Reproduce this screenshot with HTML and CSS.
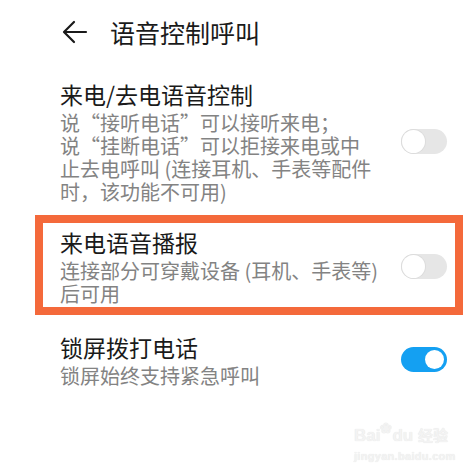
FILE: index.html
```html
<!DOCTYPE html>
<html>
<head>
    <meta charset="utf-8">
    <title>语音控制呼叫</title>
    <link rel="stylesheet" href="styles.css">
</head>
<body>
    <div class="header">
        <svg class="back" width="26" height="24" viewBox="0 0 26 24">
            <path d="M24 12H3M12 2L2 12l10 10" fill="none" stroke="#1a1a1a" stroke-width="2.2" stroke-linecap="round" stroke-linejoin="round"/>
        </svg>
        <h1>语音控制呼叫</h1>
    </div>

    <ul class="settings">
        <li class="item">
            <div class="text">
                <div class="title">来电/去电语音控制</div>
                <div class="desc">
                    <div class="line">说“接听电话”可以接听来电；</div>
                    <div class="line">说“挂断电话”可以拒接来电或中</div>
                    <div class="line">止去电呼叫 (连接耳机、手表等配件</div>
                    <div class="line">时，该功能不可用)</div>
                </div>
            </div>
            <span class="switch"></span>
        </li>
        <li class="item marked">
            <div class="text">
                <div class="title">来电语音播报</div>
                <div class="desc">
                    <div class="line">连接部分可穿戴设备 (耳机、手表等)</div>
                    <div class="line">后可用</div>
                </div>
            </div>
            <span class="switch"></span>
        </li>
        <li class="item last">
            <div class="text">
                <div class="title">锁屏拨打电话</div>
                <div class="desc">
                    <div class="line">锁屏始终支持紧急呼叫</div>
                </div>
            </div>
            <span class="switch on"></span>
        </li>
    </ul>

    <!-- watermark -->
    <div class="watermark">
        <div class="wm-logo">Bai<span class="paw">❀</span>du <span class="wm-cn">经验</span></div>
        <div class="wm-url">jingyan.baidu.com</div>
    </div>
</body>
</html>
```

FILE: styles.css
```css
* {
    box-sizing: border-box;
}

html, body {
    margin: 0;
    padding: 0;
    background: #fff;
    font-family: "Noto Sans CJK SC", "Noto Sans", sans-serif;
}

body {
    position: relative;
    width: 474px;
    height: 471px;
    overflow: hidden;
}

.header {
    display: flex;
    align-items: center;
    height: 62px;
    padding: 1px 0 0 62px;
}

.back {
    display: block;
    margin-right: 22px;
}

.header h1 {
    margin: 0;
    font-size: 25px;
    font-weight: 400;
    line-height: 30px;
    color: #1a1a1a;
}

.settings {
    list-style: none;
    margin: 0;
    padding: 17px 0 0 0;
}

.item {
    display: flex;
    align-items: center;
    justify-content: space-between;
    padding: 0 27px 0 60px;
}

.item.marked {
    margin: 12px 11px 17px 35px;
    padding: 4px 8px 2px 17px;
    border: 8px solid #f4693b;
}

.title {
    font-size: 23px;
    line-height: 30px;
    color: #1a1a1a;
}

.desc {
    margin-top: 2px;
    font-size: 20px;
    color: #838383;
    white-space: nowrap;
}

.desc .line {
    height: 23px;
    line-height: 23px;
}

.switch {
    position: relative;
    flex: none;
    width: 46px;
    height: 25px;
    border-radius: 13px;
    background: #e6e6e6;
}

.switch:after {
    content: "";
    position: absolute;
    top: 1px;
    left: 1px;
    width: 23px;
    height: 23px;
    border-radius: 50%;
    background: #fff;
    box-shadow: 0 0 0 1px #dcdcdc;
}

.switch.on {
    background: #14a0f2;
}

.switch.on:after {
    top: 3px;
    left: auto;
    right: 3px;
    width: 19px;
    height: 19px;
    box-shadow: none;
}

.watermark {
    position: absolute;
    left: 354px;
    top: 414px;
    color: #f3f3f3;
    text-shadow: 0 0 1px #e0e0e0;
    font-family: "Liberation Sans", sans-serif;
}

.wm-logo {
    font-size: 17px;
    font-weight: 700;
    line-height: 28px;
}

.paw {
    font-size: 14px;
    vertical-align: 8px;
}

.wm-cn {
    font-family: "Noto Sans CJK SC", sans-serif;
    font-size: 15px;
}

.wm-url {
    font-size: 11px;
    font-weight: 700;
    line-height: 12px;
    letter-spacing: 0.3px;
}
```
